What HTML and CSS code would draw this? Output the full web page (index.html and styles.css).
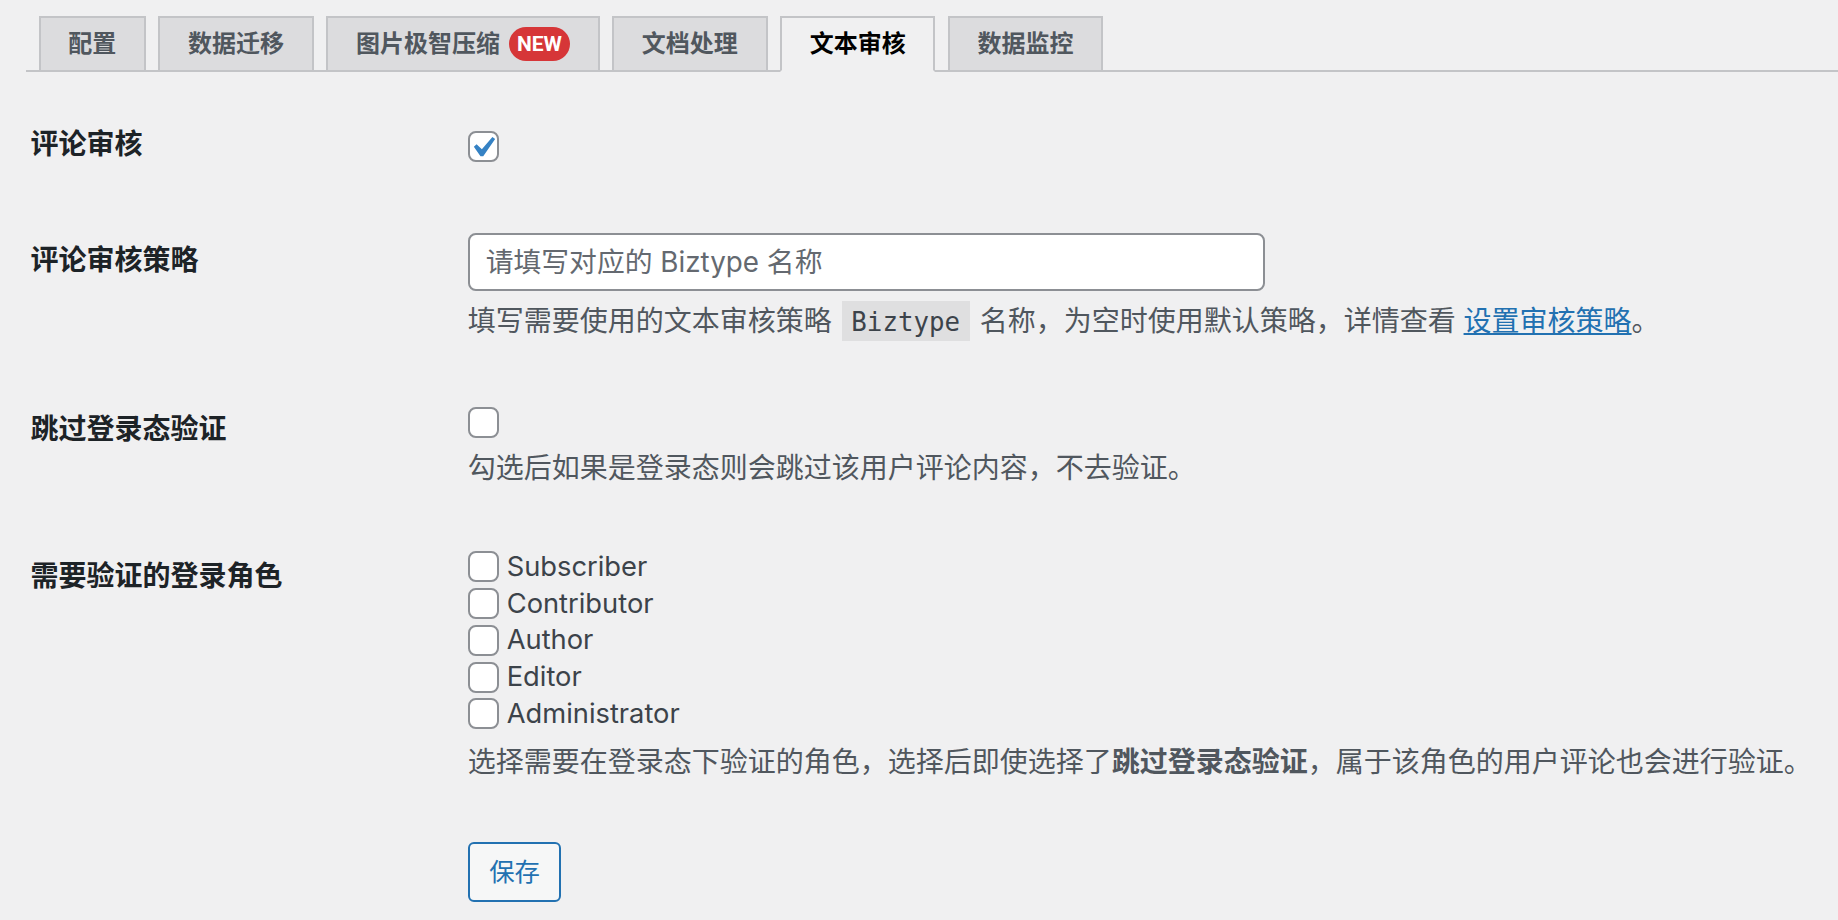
FILE: index.html
```html
<!DOCTYPE html>
<html lang="zh-CN">
<head>
<meta charset="utf-8">
<title>文本审核</title>
<link rel="stylesheet" href="styles.css">
</head>
<body>
<div class="wrap">
  <nav class="tabs">
    <a class="tab" href="#">配置</a>
    <a class="tab" href="#">数据迁移</a>
    <a class="tab" href="#">图片极智压缩<span class="badge">NEW</span></a>
    <a class="tab" href="#">文档处理</a>
    <a class="tab active" href="#">文本审核</a>
    <a class="tab" href="#">数据监控</a>
  </nav>

  <form class="form">
    <div class="row">
      <div class="label">评论审核</div>
      <div class="field">
        <div class="check-line">
          <span class="cb checked"><svg viewBox="0 0 20 20"><path d="M14.83 4.89l1.34.94-5.81 8.38H9.02L5.78 9.67l1.34-1.25 2.57 2.4z"/></svg></span>
        </div>
      </div>
    </div>

    <div class="row">
      <div class="label">评论审核策略</div>
      <div class="field">
        <div class="input"><span class="placeholder">请填写对应的 Biztype 名称</span></div>
        <p class="desc">填写需要使用的文本审核策略 <code>Biztype</code> 名称，为空时使用默认策略，详情查看 <a href="#">设置审核策略</a>。</p>
      </div>
    </div>

    <div class="row">
      <div class="label">跳过登录态验证</div>
      <div class="field">
        <div class="check-line-sm"><span class="cb"></span></div>
        <p class="desc">勾选后如果是登录态则会跳过该用户评论内容，不去验证。</p>
      </div>
    </div>

    <div class="row">
      <div class="label">需要验证的登录角色</div>
      <div class="field">
        <div class="roles">
          <label class="role"><span class="cb"></span>Subscriber</label>
          <label class="role"><span class="cb"></span>Contributor</label>
          <label class="role"><span class="cb"></span>Author</label>
          <label class="role"><span class="cb"></span>Editor</label>
          <label class="role"><span class="cb"></span>Administrator</label>
        </div>
        <p class="desc">选择需要在登录态下验证的角色，选择后即使选择了<strong>跳过登录态验证</strong>，属于该角色的用户评论也会进行验证。</p>
      </div>
    </div>

    <div class="submit">
      <button type="button" class="button">保存</button>
    </div>
  </form>
</div>
</body>
</html>
```

FILE: styles.css
```css
* {
  box-sizing: border-box;
}

html,
body {
  margin: 0;
  background: #f0f0f1;
}

body {
  font-family: Inter, "Noto Sans CJK SC", sans-serif;
  color: #3c434a;
}

.wrap {
  padding-left: 26px;
}

/* Tabs */
.tabs {
  display: flex;
  align-items: flex-end;
  padding-top: 16px;
  border-bottom: 2px solid #c3c4c7;
}

.tab {
  display: flex;
  align-items: center;
  margin-left: 12.5px;
  margin-bottom: -2px;
  padding: 7px 27.7px;
  border: 2px solid #c3c4c7;
  background: #dcdcde;
  color: #50575e;
  font-size: 24px;
  font-weight: 600;
  line-height: 37.7px;
  text-decoration: none;
}

.tab.active {
  background: #f0f0f1;
  color: #000;
  border-bottom-color: #f0f0f1;
}

.badge {
  margin-left: 9px;
  height: 34px;
  padding: 0 8px;
  border-radius: 17px;
  background: #d63638;
  color: #fff;
  font-family: Roboto, sans-serif;
  font-size: 21px;
  font-weight: 700;
  line-height: 34px;
}

/* Form */
.form {
  margin-top: 15.5px;
}

.row {
  display: grid;
  grid-template-columns: 441.7px 1fr;
  align-items: start;
}

.label {
  padding: 39px 0 39px 4.5px;
  font-size: 28px;
  line-height: 36px;
  font-weight: 600;
  color: #1d2327;
}

.field {
  padding: 29px 0;
  font-size: 28px;
  line-height: 36px;
}

.check-line {
  display: flex;
  padding: 15px 0 12px;
}

.check-line-sm {
  display: flex;
  padding-top: 6px;
}

.cb {
  position: relative;
  flex: none;
  display: block;
  width: 31px;
  height: 31px;
  border: 2px solid #8c8f94;
  border-radius: 7.8px;
  background: #fff;
}

.cb svg {
  position: absolute;
  left: -7.8px;
  top: -5.85px;
  width: 41px;
  height: 41px;
  fill: #3582c4;
}

.input {
  display: flex;
  align-items: center;
  width: 797px;
  height: 57.4px;
  margin-top: 1px;
  padding: 0 16px;
  border: 2px solid #8c8f94;
  border-radius: 7.8px;
  background: #fff;
}

.placeholder {
  color: #646970;
  font-size: 27.8px;
}

.desc {
  margin: 12px 0 3.5px;
  color: #50575e;
}

.desc code {
  margin: 0 2px;
  padding: 6px 9.75px 4px;
  background: rgba(0, 0, 0, 0.07);
  color: #3c434a;
  font-family: "DejaVu Sans Mono", monospace;
  font-size: 25.8px;
}

.desc a {
  color: #2271b1;
  text-decoration: underline;
}

.desc strong {
  font-weight: 600;
}

.roles {
  display: flex;
  flex-direction: column;
  margin-top: 1px;
}

.role {
  display: flex;
  align-items: center;
  gap: 8px;
  height: 36.7px;
  color: #3c434a;
  font-size: 27.3px;
}

.submit {
  padding-left: 441.7px;
  margin-top: 29.2px;
}

.button {
  height: 59.8px;
  padding: 0 19.5px;
  border: 2px solid #2271b1;
  border-radius: 5.9px;
  background: #f6f7f7;
  color: #2271b1;
  font-family: Inter, "Noto Sans CJK SC", sans-serif;
  font-size: 25.4px;
  line-height: 1;
}
```
